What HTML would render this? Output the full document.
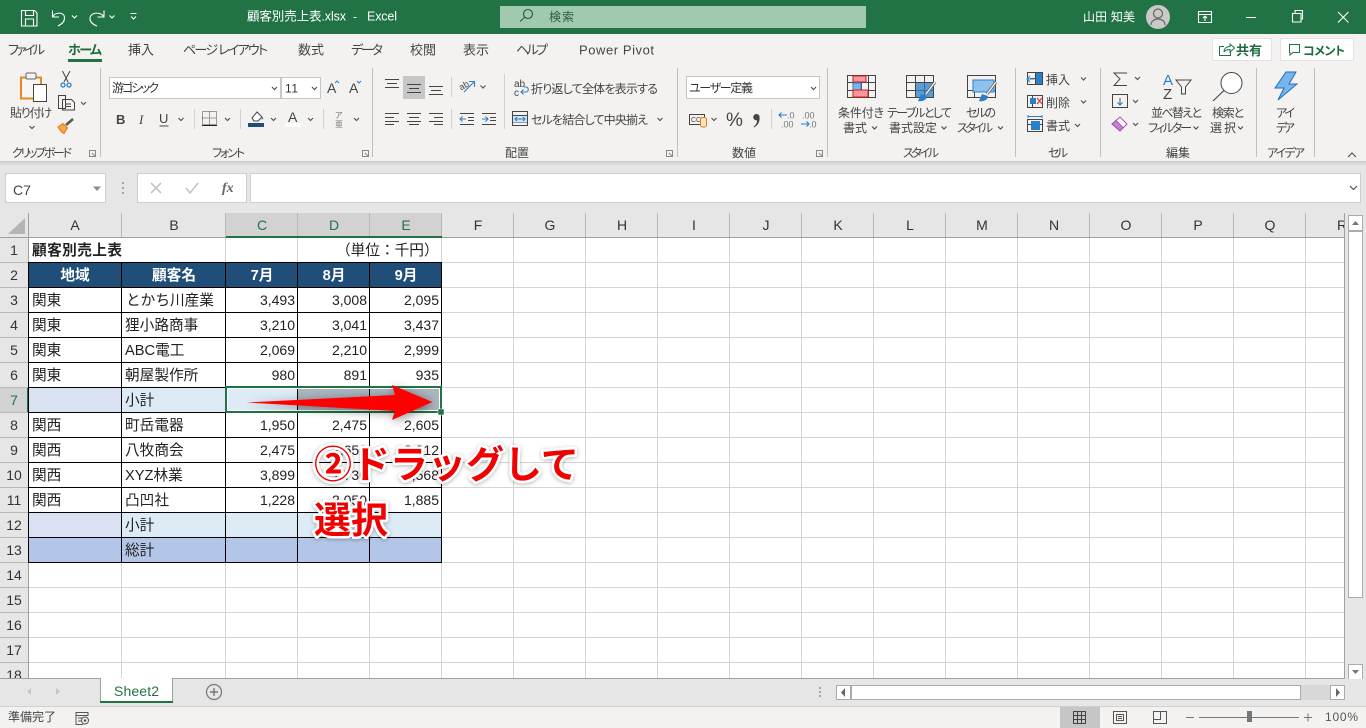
<!DOCTYPE html>
<html lang="ja"><head><meta charset="utf-8"><title>顧客別売上表.xlsx - Excel</title>
<style>
html,body{margin:0;padding:0;width:1366px;height:728px;overflow:hidden;background:#fff}
svg{display:block;position:absolute;left:0;top:0}
text{font-family:"Liberation Sans","Noto Sans CJK JP",sans-serif;font-size:12px;fill:#444;font-feature-settings:"palt"}
.tab{font-size:13px}
.gl{font-size:12px}
.cell text,text.cell{font-size:14.67px;fill:#222;font-feature-settings:normal}
.num text{font-size:14px;fill:#222;text-anchor:end;font-feature-settings:normal}
.hd text{font-size:14px;fill:#333;text-anchor:middle}
.w text{fill:#fff}
.ic{fill:none;stroke:#444;stroke-width:1}
.ch{fill:none;stroke:#555;stroke-width:1.2}
</style></head><body>
<svg width="1366" height="728" viewBox="0 0 1366 728" xmlns="http://www.w3.org/2000/svg">
<defs>
<filter id="sh" x="-10%" y="-60%" width="120%" height="220%"><feDropShadow dx="1" dy="2" stdDeviation="5" flood-color="#000" flood-opacity=".45"/></filter>
<filter id="sh2" x="-10%" y="-30%" width="120%" height="160%"><feDropShadow dx="0" dy="1" stdDeviation="2" flood-color="#000" flood-opacity=".3"/></filter>
<clipPath id="colclip"><rect x="0" y="213" width="1345" height="25"/></clipPath>
<linearGradient id="rs" x1="0" y1="0" x2="0" y2="1"><stop offset="0" stop-color="#c9c9c9"/><stop offset="1" stop-color="#e6e6e6"/></linearGradient>
</defs>

<!-- base -->
<rect width="1366" height="728" fill="#e6e6e6"/>
<rect y="0" width="1366" height="34" fill="#217346"/>
<rect y="34" width="1366" height="127" fill="#f3f2f1"/>
<rect y="161" width="1366" height="5" fill="url(#rs)"/>

<!-- title bar -->
<g fill="none" stroke="#fff" stroke-width="1.1">
<path d="M21.5 10.5h13l2.500 2.500v13h-15.500z M25.500 10.500v5h8v-5 M25.500 25.500v-6.500h8v6.500"/>
<path d="M52.500 10.500v6.500h6.500 M52.500 17C55 12 64 11.500 64.500 17.500C65 22 61 24.500 58 26"/>
<path d="M104 10.500v6.500h-6.500 M104 17C101 12 92 11.500 90 17.500C89.500 22 93 24.500 97 26"/>
<path d="M72 15.500l2.500 2.500 2.500-2.500 M109.500 15.500l2.500 2.500 2.500-2.500 M130.500 13.500h6 M131 16.500l2.500 2.500 2.500-2.500"/>
<path d="M1198.500 11.500h13v11h-13z M1198.500 14.500h13 M1205 21v-5 M1203 18l2-2 2 2"/>
<path d="M1246 17.500h10 M1292.500 13.500h8.500v8.500h-8.500z M1295 13v-2.500h7.500v8.500h-1.500 M1338 12l10.500 10.500 M1348.500 12l-10.500 10.500"/>
</g>
<g class="w">
<text x="247" y="20.500" textLength="99" style="font-size:12.500px">顧客別売上表.xlsx</text>
<text x="353" y="20.500">-</text>
<text x="367" y="20.500" textLength="30" style="font-size:12.500px">Excel</text>
<text x="1083" y="21" textLength="52">山田 知美</text>
</g>
<rect x="500" y="6" width="366" height="22" fill="#a0c9b0"/>
<circle cx="528" cy="14" r="4.500" fill="none" stroke="#1f5d3a" stroke-width="1.100"/><path d="M524.500 17.500l-4.500 4" stroke="#1f5d3a" stroke-width="1.100"/>
<text x="549" y="21" textLength="25" style="fill:#2b5d40">検索</text>
<circle cx="1158" cy="17" r="12" fill="#c9c9c9"/>
<circle cx="1158" cy="13.500" r="4.500" fill="none" stroke="#666" stroke-width="1.200"/><path d="M1151 25c0-8 14-8 14 0" fill="none" stroke="#666" stroke-width="1.200"/>

<!-- tabs -->
<text class="tab" x="8" y="54.500" textLength="37">ファイル</text>
<text class="tab" x="68" y="54.500" textLength="34" style="font-weight:700;fill:#1f6b40">ホーム</text>
<rect x="68" y="59" width="34" height="3" fill="#217346"/>
<text class="tab" x="128" y="54.500" textLength="26">挿入</text>
<text class="tab" x="183" y="54.500" textLength="85">ページ レイアウト</text>
<text class="tab" x="298" y="54.500" textLength="26">数式</text>
<text class="tab" x="351" y="54.500" textLength="32">データ</text>
<text class="tab" x="410" y="54.500" textLength="26">校閲</text>
<text class="tab" x="463" y="54.500" textLength="26">表示</text>
<text class="tab" x="516" y="54.500" textLength="32">ヘルプ</text>
<text x="579" y="54.500" textLength="75" style="font-size:13px">Power Pivot</text>

<rect x="1212.500" y="38.500" width="59" height="22" rx="1.500" fill="#fff" stroke="#e3e2e1"/>
<path d="M1224 46.500h-4.500v9h11v-3.500 M1224 52c0-3.500 2.500-5.500 6-5.500v-2.500l4.500 4-4.500 4v-2.500c-2.500 0-4.500 .5-6 2.500" fill="none" stroke="#217346"/>
<text x="1236" y="55" textLength="26" style="font-weight:700;fill:#1f6b40;font-size:13px">共有</text>
<rect x="1280.500" y="38.500" width="73" height="22" rx="1.500" fill="#fff" stroke="#e3e2e1"/>
<path d="M1289.500 44.500h10v8h-6.500l-3 2.500v-2.500h-.5z" fill="none" stroke="#217346"/>
<text x="1303" y="55" textLength="42" style="font-weight:700;fill:#1f6b40">コメント</text>

<!-- ribbon separators -->
<g stroke="#c0bfbe" shape-rendering="crispEdges">
<path d="M100.500 68v89 M372.500 68v89 M677.500 68v89 M827.500 68v89 M1015.500 68v89 M1100.500 68v89 M1256.500 68v89 M1314.500 68v89"/>
<path stroke="#d4d3d2" d="M194.500 109v20 M240.500 109v20 M323.500 109v20 M451.500 77v20 M451.500 109v20 M504.500 74v55 M771.500 109v20"/>
</g>
<!-- group labels -->
<g>
<text class="gl" x="12" y="157" textLength="60">クリップボード</text>
<text class="gl" x="212" y="157" textLength="33">フォント</text>
<text class="gl" x="505" y="157" textLength="24">配置</text>
<text class="gl" x="732" y="157" textLength="24">数値</text>
<text class="gl" x="903" y="157" textLength="36">スタイル</text>
<text class="gl" x="1048" y="157" textLength="20">セル</text>
<text class="gl" x="1166" y="157" textLength="24">編集</text>
<text class="gl" x="1267" y="157" textLength="38">アイデア</text>
</g>
<g fill="none" stroke="#888" stroke-width="1">
<path d="M89.500 150.500h6v6h-6z M92 153l3 3"/>
<path d="M362.500 150.500h6v6h-6z M365 153l3 3 M666.500 150.500h6v6h-6z M669 153l3 3 M816.500 150.500h6v6h-6z M819 153l3 3"/>
</g>
<path class="ch" d="M1348 157l4-4 4 4"/>

<!-- clipboard -->
<path d="M21 77.500h20v21h-20z" fill="#f7f6f5" stroke="#e8891d" stroke-width="2"/>
<rect x="26" y="73" width="10" height="6" rx="1" fill="#f3f2f1" stroke="#666"/>
<rect x="33.500" y="84.500" width="13" height="17" fill="#fff" stroke="#444"/>
<text x="10" y="117" textLength="42">貼り付け</text>
<path class="ch" d="M29.500 126l2.500 2.500 2.500-2.500"/>
<g fill="none" stroke="#444"><path d="M62.500 71l5.500 11 M70 71l-6 11"/><circle cx="63" cy="85" r="2" stroke="#2a7fc9" stroke-width="1.300"/><circle cx="69" cy="85" r="2" stroke="#2a7fc9" stroke-width="1.300"/>
<path d="M58.500 95.500h7v13h-7z M62.500 99.500h9l3 3v7.500h-12z" fill="#f3f2f1"/><path d="M65 104h6 M65 106.500h6"/></g>
<path class="ch" d="M81 102l2.500 2.500 2.500-2.500"/>
<path d="M58 127l5-3.500 4.500 4.500-3.500 5.500c-2-.5-4-3-6-6.500z" fill="#f5a64a" stroke="#e07b12"/><path d="M66 125l7-6" stroke="#555" stroke-width="2.500"/>

<!-- font -->
<rect x="109.500" y="77.500" width="171" height="21" fill="#fff" stroke="#c6c6c6"/>
<rect x="281.500" y="77.500" width="39" height="21" fill="#fff" stroke="#c6c6c6"/>
<text x="112" y="92" textLength="47" style="fill:#333">游ゴシック</text>
<text x="285" y="92.500" textLength="13" style="fill:#333">11</text>
<path class="ch" d="M272 87l2.500 2.500 2.500-2.500 M312 87l2.500 2.500 2.500-2.500"/>
<text x="327" y="93" style="font-size:14px">A</text><path d="M335 83l2-2 2 2" fill="none" stroke="#2a7fc9"/>
<text x="349" y="93" style="font-size:14px">A</text><path d="M357 81l2 2 2-2" fill="none" stroke="#2a7fc9"/>
<text x="116" y="124" style="font-size:13px;font-weight:700">B</text>
<text x="139" y="124" style="font-size:13px;font-style:italic;font-family:'Liberation Serif',serif">I</text>
<text x="159" y="123" style="font-size:13px">U</text><path d="M159.500 126h9" stroke="#444"/>
<path class="ch" d="M178.500 118l2.500 2.500 2.500-2.500 M225 118l2.500 2.500 2.500-2.500 M271 118l2.500 2.500 2.500-2.500 M308 118l2.500 2.500 2.500-2.500 M354 118l2.500 2.500 2.500-2.500"/>
<path d="M202.500 111.500h14v13h-14z M209.500 111.500v13 M202.500 118h14" fill="none" stroke="#444" stroke-dasharray="1 1"/><rect x="202" y="125" width="15" height="1" fill="#222"/>
<path d="M252 118l5-6 5 5-4 4h-4z" fill="#fff" stroke="#444"/><path d="M262 116l1.500 3-2 .5z" fill="#2a7fc9"/><rect x="248" y="123" width="16" height="4" fill="#1f4e79"/>
<text x="288" y="122" style="font-size:14px">A</text><rect x="285" y="123" width="16" height="4" fill="#fff"/>
<text x="335" y="118" style="font-size:8px;fill:#777">ア</text><text x="335" y="127" style="font-size:8px;fill:#777">亜</text>

<!-- align -->
<rect x="403" y="76" width="22" height="23" fill="#c6c6c6"/>
<path class="ic" stroke="#333" d="M385 79.500h14 M387 83.500h10 M385 87.500h14 M407 84.500h14 M409 88.500h10 M407 92.500h14 M429 86.500h14 M431 90.500h10 M429 94.500h14 M385 113.500h14 M385 117.500h9 M385 121.500h14 M385 124.500h9 M407 113.500h14 M409 117.500h10 M407 121.500h14 M409 124.500h10 M429 113.500h14 M434 117.500h9 M429 121.500h14 M434 124.500h9"/>
<text x="459" y="89" style="font-size:9px;fill:#444" transform="rotate(-30 463 86)">ab</text>
<path d="M464 92l10-10 M469 81.500h5.500v5.500" fill="none" stroke="#2a7fc9" stroke-width="1.100"/>
<path class="ch" d="M480.500 85.500l2.500 2.500 2.500-2.500 M657.500 118l2.500 2.500 2.500-2.500 M711.500 118l2.500 2.500 2.500-2.500"/>
<path class="ic" d="M460 113.500h14 M468 117.500h6 M468 120.500h6 M460 124.500h14 M482 113.500h14 M490 117.500h6 M490 120.500h6 M482 124.500h14"/>
<path d="M466 119h-6 M462.500 116.500l-2.500 2.500 2.500 2.500 M482 119h6 M485.500 116.500l2.500 2.500-2.500 2.500" fill="none" stroke="#2a7fc9" stroke-width="1.100"/>
<text x="514" y="87" style="font-size:10px">ab</text><text x="514" y="96" style="font-size:10px">c</text>
<path d="M521 92h5c3 0 3-5 0-5h-2 M523.500 89.500l-2.500 2.500 2.500 2.500" fill="none" stroke="#2a7fc9" stroke-width="1.100"/>
<text x="531" y="93" textLength="127">折り返して全体を表示する</text>
<path d="M512.500 111.500h15v14h-15z M512.500 115.500h15 M512.500 122h15" fill="none" stroke="#444"/><rect x="513" y="116" width="14" height="6" fill="#cfe4f7"/><path d="M515 119h10 M517 117l-2 2 2 2 M523 117l2 2-2 2" fill="none" stroke="#2a7fc9"/>
<text x="531" y="124" textLength="117">セルを結合して中央揃え</text>

<!-- number -->
<rect x="686.500" y="76.500" width="133" height="22" fill="#fff" stroke="#c6c6c6"/>
<text x="689" y="92" textLength="64" style="fill:#333">ユーザー定義</text>
<path class="ch" d="M811 87l2.500 2.500 2.500-2.500"/>
<path d="M689.500 114.500h15v10h-15z" fill="none" stroke="#444"/><text x="691" y="122" style="font-size:7px;fill:#444">CC</text>
<rect x="700.500" y="117.500" width="6" height="9.500" rx="2" fill="#fbe3c6" stroke="#e07b12"/>
<text x="726" y="126" style="font-size:19px;fill:#444">%</text>
<path d="M756.500 114a3.200 3.200 0 1 1-.1 6.400a3.200 3.200 0 0 1 .1-6.400z M759.500 117c.5 4-1 8-5.500 10.500l-.5-.8c2.500-1.700 3.500-4 3.500-6z" fill="#444"/>
<text x="787" y="118.500" style="font-size:9px;fill:#777">.0</text><text x="781" y="127.500" style="font-size:9px;fill:#777">.00</text>
<path d="M787 115h-8 M781.500 112.500l-2.500 2.500 2.500 2.500" fill="none" stroke="#2a7fc9" stroke-width="1.100"/>
<text x="802" y="118.500" style="font-size:9px;fill:#777">.00</text><text x="809" y="127.500" style="font-size:9px;fill:#777">.0</text>
<path d="M801 124h8 M806.500 121.500l2.500 2.500-2.500 2.500" fill="none" stroke="#2a7fc9" stroke-width="1.100"/>

<!-- styles -->
<g fill="none" stroke="#444" shape-rendering="crispEdges">
<path d="M847.500 75.500h28v22h-28z M847.500 82.500h28 M847.500 90.500h28 M854.500 75.500v22 M861.500 75.500v22 M868.500 75.500v22"/>
</g>
<rect x="853" y="76" width="13" height="6" fill="#f79a9f" stroke="#d01b1b"/><rect x="853" y="83" width="8" height="7" fill="#7db7ea" stroke="#2a7fc9"/><rect x="853" y="90" width="15" height="7" fill="#f79a9f" stroke="#d01b1b"/>
<text x="838" y="117" textLength="46">条件付き</text>
<text x="843" y="132" textLength="24">書式</text>
<g fill="none" stroke="#444" shape-rendering="crispEdges"><path d="M906.500 75.500h27v22h-27z M906.500 82.500h27 M906.500 90.500h27 M915.500 75.500v22 M924.500 75.500v22 M967.500 75.500h28v22h-28z M967.500 90.500h28 M974.500 90.500v7"/></g>
<rect x="916" y="83" width="17" height="14" fill="#2a7fc9" opacity=".75"/><rect x="973" y="80" width="21" height="12" fill="#8dc1ee" stroke="#2a7fc9"/>
<path d="M935 82l-9 12 M996 82l-9 12" stroke="#666" stroke-width="3" fill="none"/>
<path d="M935 82l-9 12 M996 82l-9 12" stroke="#fff" stroke-width="1.200" fill="none"/>
<path d="M918 101l3-7 6 2c0 4-5 6-9 5z M979 101l3-7 6 2c0 4-5 6-9 5z" fill="#2a7fc9"/>
<text x="887" y="117" textLength="65">テーブルとして</text>
<text x="889" y="132" textLength="48">書式設定</text>
<text x="966" y="117" textLength="30">セルの</text>
<text x="957" y="132" textLength="36">スタイル</text>
<path class="ch" d="M872 126.500l2.500 2.500 2.500-2.500 M941.500 126.500l2.500 2.500 2.500-2.500 M998 126.500l2.500 2.500 2.500-2.500 M1193.500 126.500l2.500 2.500 2.500-2.500 M1238 126.500l2.500 2.500 2.500-2.500"/>

<!-- cells -->
<g fill="none" stroke="#444" shape-rendering="crispEdges">
<path d="M1027.500 72.500h15v12h-15z M1027.500 78.500h15 M1035.500 72.500v12"/>
<path d="M1027.500 95.500h15v12h-15z M1032.500 95.500v12"/>
<path d="M1027.500 119.500h15v12h-15z M1027.500 124.500h15"/>
</g>
<rect x="1036" y="73" width="6" height="11" fill="#2a7fc9"/>
<path d="M1027 79h7 M1030 76l-3 3 3 3" stroke="#2a7fc9" fill="#f3f2f1"/>
<rect x="1030" y="98" width="6" height="6" fill="#2a7fc9"/><path d="M1037 98l5 6 M1042 98l-5 6" stroke="#e03b3b" stroke-width="1.300"/>
<rect x="1031" y="121" width="9" height="9" fill="#2a7fc9"/>
<path d="M1028 116.500h14 M1028 115v3 M1042 115v3" stroke="#2a7fc9" fill="none"/>
<text x="1046" y="84" textLength="24">挿入</text>
<text x="1046" y="107" textLength="24">削除</text>
<text x="1046" y="130" textLength="24">書式</text>
<path class="ch" d="M1081 77.500l2.500 2.500 2.500-2.500 M1081 100.500l2.500 2.500 2.500-2.500 M1075 124l2.500 2.500 2.500-2.500"/>

<!-- editing -->
<path d="M1127 73h-13l6 6-6 6.500h13" fill="none" stroke="#444"/>
<path d="M1112.500 94.500h15v13h-15z" fill="none" stroke="#444"/><path d="M1120 98v7 M1117.500 102.500l2.500 2.500 2.500-2.500" fill="none" stroke="#2a7fc9" stroke-width="1.200"/>
<path d="M1112 124l8-7 7 7-7 7z" fill="#fff" stroke="#a94fb3"/><path d="M1112 124l4-3.500 7 7-3 3.500z" fill="#c77fd0" stroke="#a94fb3"/>
<path class="ch" d="M1135 77l2.500 2.500 2.500-2.500 M1133 100l2.500 2.500 2.500-2.500 M1133 123l2.500 2.500 2.500-2.500"/>
<text x="1163" y="85" style="font-size:15px;fill:#2a7fc9">A</text>
<text x="1163" y="99" style="font-size:15px;fill:#444">Z</text>
<path d="M1176 80h15l-5.500 7v7l-4 0v-7z" fill="none" stroke="#444"/>
<text x="1151" y="117" textLength="51">並べ替えと</text>
<text x="1148" y="132" textLength="44">フィルター</text>
<circle cx="1231.500" cy="83" r="10.500" fill="#fff" stroke="#444"/><path d="M1224 90.500l-11 10.500" stroke="#444" stroke-width="1.100"/>
<text x="1212" y="117" textLength="32">検索と</text>
<text x="1210" y="132" textLength="26">選択</text>
<path d="M1286 72h10l-7 12h8L1278 100l6-12h-9z" fill="#79b4ec" stroke="#1f6fc0"/>
<text x="1276" y="117" textLength="19">アイ</text>
<text x="1276" y="132" textLength="19">デア</text>

<!-- formula bar -->
<rect x="5.500" y="173.500" width="100" height="29" fill="#fff" stroke="#cfcfcf"/>
<text x="13" y="195" style="font-size:14px">C7</text>
<path d="M93 186.500h8l-4 4.500z" fill="#8a8a8a"/>
<path d="M122 182h2v2h-2z M122 187h2v2h-2z M122 192h2v2h-2z" fill="#a5a5a5"/>
<rect x="137.500" y="173.500" width="109" height="29" fill="#fff" stroke="#cfcfcf"/>
<rect x="250.500" y="173.500" width="1110" height="29" fill="#fff" stroke="#cfcfcf"/>
<path d="M151 183l10 10 M161 183l-10 10 M186 188l4 5 8-10" fill="none" stroke="#c4c4c4" stroke-width="1.600"/>
<text x="222" y="192" style="font-size:14px;font-style:italic;font-weight:700;font-family:'Liberation Serif',serif;fill:#666">fx</text>
<path class="ch" d="M1350 186l3.500 3.500 3.500-3.500"/>

<!-- sheet -->
<rect x="29" y="238" width="1316" height="441" fill="#fff"/>
<rect x="0" y="213" width="1345" height="25" fill="#e6e6e6"/>
<rect x="0" y="238" width="28" height="441" fill="#e6e6e6"/>
<path d="M25 218v16h-17z" fill="#b5b5b5"/>
<rect x="226" y="213" width="216" height="23" fill="#d2d2d2"/>
<rect x="0" y="388" width="28" height="24" fill="#d2d2d2"/>
<g stroke="#d4d4d4" shape-rendering="crispEdges" fill="none">
<path d="M29 262.500H1345 M29 287.500H1345 M29 312.500H1345 M29 337.500H1345 M29 362.500H1345 M29 387.500H1345 M29 412.500H1345 M29 437.500H1345 M29 462.500H1345 M29 487.500H1345 M29 512.500H1345 M29 537.500H1345 M29 562.500H1345 M29 587.500H1345 M29 612.500H1345 M29 637.500H1345 M29 662.500H1345"/>
<path d="M225.500 238V679 M297.500 238V679 M441.500 238V679 M513.500 238V679 M585.500 238V679 M657.500 238V679 M729.500 238V679 M801.500 238V679 M873.500 238V679 M945.500 238V679 M1017.500 238V679 M1089.500 238V679 M1161.500 238V679 M1233.500 238V679 M1305.500 238V679"/>
<path d="M121.500 262V679 M369.500 262V679"/>
</g>
<!-- header lines -->
<g stroke="#b8b8b8" shape-rendering="crispEdges" fill="none">
<path d="M121.500 213v24 M225.500 213v24 M297.500 213v24 M369.500 213v24 M441.500 213v24 M513.500 213v24 M585.500 213v24 M657.500 213v24 M729.500 213v24 M801.500 213v24 M873.500 213v24 M945.500 213v24 M1017.500 213v24 M1089.500 213v24 M1161.500 213v24 M1233.500 213v24 M1305.500 213v24"/>
<path d="M0 262.500h28 M0 287.500h28 M0 312.500h28 M0 337.500h28 M0 362.500h28 M0 387.500h28 M0 412.500h28 M0 437.500h28 M0 462.500h28 M0 487.500h28 M0 512.500h28 M0 537.500h28 M0 562.500h28 M0 587.500h28 M0 612.500h28 M0 637.500h28 M0 662.500h28"/>
<path stroke="#9f9f9f" d="M28.500 213V679 M0 237.500H1345"/>
</g>
<rect x="226" y="236" width="216" height="2" fill="#217346"/>
<rect x="27" y="388" width="2" height="24" fill="#217346"/>

<g class="hd" clip-path="url(#colclip)">
<text x="75" y="230">A</text><text x="174" y="230">B</text>
<text x="262" y="230" style="fill:#217346">C</text><text x="334" y="230" style="fill:#217346">D</text><text x="406" y="230" style="fill:#217346">E</text>
<text x="478" y="230">F</text><text x="550" y="230">G</text><text x="622" y="230">H</text><text x="694" y="230">I</text><text x="766" y="230">J</text><text x="838" y="230">K</text><text x="910" y="230">L</text><text x="982" y="230">M</text><text x="1054" y="230">N</text><text x="1126" y="230">O</text><text x="1198" y="230">P</text><text x="1270" y="230">Q</text><text x="1342" y="230">R</text>
</g>
<g class="hd">
<text x="14" y="255">1</text><text x="14" y="280">2</text><text x="14" y="305">3</text><text x="14" y="330">4</text><text x="14" y="355">5</text><text x="14" y="380">6</text><text x="14" y="405" style="fill:#217346">7</text><text x="14" y="430">8</text><text x="14" y="455">9</text><text x="14" y="480">10</text><text x="14" y="505">11</text><text x="14" y="530">12</text><text x="14" y="555">13</text><text x="14" y="580">14</text><text x="14" y="605">15</text><text x="14" y="630">16</text><text x="14" y="655">17</text><text x="14" y="680">18</text>
</g>

<!-- table fills -->
<rect x="29" y="263" width="412" height="24" fill="#1f4e79"/>
<rect x="29" y="388" width="92" height="24" fill="#d9e1f2"/><rect x="122" y="388" width="319" height="24" fill="#ddebf7"/>
<rect x="29" y="513" width="92" height="24" fill="#d9e1f2"/><rect x="122" y="513" width="319" height="24" fill="#ddebf7"/>
<rect x="29" y="538" width="412" height="24" fill="#b4c6e7"/>
<rect x="298" y="388" width="144" height="24" fill="#aab5be"/>
<!-- table borders -->
<g stroke="#000" shape-rendering="crispEdges" fill="none">
<path d="M29 262.500H442 M29 287.500H442 M29 312.500H442 M29 337.500H442 M29 362.500H442 M29 387.500H442 M29 412.500H442 M29 437.500H442 M29 462.500H442 M29 487.500H442 M29 512.500H442 M29 537.500H442 M29 562.500H442"/>
<path d="M121.500 262V563 M225.500 262V563 M297.500 262V563 M369.500 262V563 M441.500 262V563 M28.500 262V563"/>
</g>

<!-- table text -->
<text x="32" y="255" class="cell" textLength="90" style="font-weight:700">顧客別売上表</text>
<text x="336" y="255" class="cell">（単位：千円）</text>
<text x="75" y="280" text-anchor="middle" class="cell" style="fill:#fff;font-weight:700">地域</text>
<text x="174" y="280" text-anchor="middle" class="cell" style="fill:#fff;font-weight:700">顧客名</text>
<text x="262" y="280" text-anchor="middle" class="cell" style="fill:#fff;font-weight:700">7月</text>
<text x="334" y="280" text-anchor="middle" class="cell" style="fill:#fff;font-weight:700">8月</text>
<text x="406" y="280" text-anchor="middle" class="cell" style="fill:#fff;font-weight:700">9月</text>
<g class="cell">
<text x="32" y="305">関東</text><text x="126" y="305">とかち川産業</text>
<text x="32" y="330">関東</text><text x="125" y="330">狸小路商事</text>
<text x="32" y="355">関東</text><text x="125" y="355">ABC電工</text>
<text x="32" y="380">関東</text><text x="125" y="380">朝屋製作所</text>
<text x="125" y="405">小計</text>
<text x="32" y="430">関西</text><text x="125" y="430">町岳電器</text>
<text x="32" y="455">関西</text><text x="125" y="455">八牧商会</text>
<text x="32" y="480">関西</text><text x="125" y="480">XYZ林業</text>
<text x="32" y="505">関西</text><text x="125" y="505">凸凹社</text>
<text x="125" y="530">小計</text>
<text x="125" y="555">総計</text>
</g>
<g class="num">
<text x="295" y="305">3,493</text><text x="367" y="305">3,008</text><text x="439" y="305">2,095</text>
<text x="295" y="330">3,210</text><text x="367" y="330">3,041</text><text x="439" y="330">3,437</text>
<text x="295" y="355">2,069</text><text x="367" y="355">2,210</text><text x="439" y="355">2,999</text>
<text x="295" y="380">980</text><text x="367" y="380">891</text><text x="439" y="380">935</text>
<text x="295" y="430">1,950</text><text x="367" y="430">2,475</text><text x="439" y="430">2,605</text>
<text x="295" y="455">2,475</text><text x="367" y="455">2,651</text><text x="439" y="455">3,212</text>
<text x="295" y="480">3,899</text><text x="367" y="480">1,730</text><text x="439" y="480">4,568</text>
<text x="295" y="505">1,228</text><text x="367" y="505">2,050</text><text x="439" y="505">1,885</text>
</g>

<!-- selection -->
<rect x="226" y="387" width="215" height="25" fill="none" stroke="#217346" stroke-width="2" shape-rendering="crispEdges"/>
<rect x="227.500" y="388.500" width="212" height="22" fill="none" stroke="#fff" shape-rendering="crispEdges"/>
<rect x="438" y="409" width="6" height="6" fill="#217346" stroke="#fff" stroke-width=".5"/>

<!-- arrow -->
<path d="M246.500 402.500L395 395 392 385 432.500 402 392 420 395 411z" fill="#fe0000" filter="url(#sh)"/>

<!-- annotation -->
<g filter="url(#sh2)">
<text x="314" y="478" style="font-size:38px;font-weight:700;fill:#f00000;stroke:#fff;stroke-width:5px;paint-order:stroke;stroke-linejoin:round;font-feature-settings:normal">②ドラッグして</text>
<text x="314" y="533" style="font-size:37px;font-weight:700;fill:#f00000;stroke:#fff;stroke-width:5px;paint-order:stroke;stroke-linejoin:round;font-feature-settings:normal">選択</text>
</g>

<!-- vertical scrollbar -->
<rect x="1345" y="213" width="21" height="466" fill="#e6e6e6"/>
<path d="M1344.500 213V679" stroke="#a0a0a0" shape-rendering="crispEdges"/>
<rect x="1348.500" y="215.500" width="14" height="15" fill="#fff" stroke="#ababab"/>
<path d="M1352 225l3.500-4 3.500 4z" fill="#777"/>
<rect x="1348.500" y="231.500" width="14" height="366" fill="#fff" stroke="#ababab"/>
<rect x="1348.500" y="664.500" width="14" height="15" fill="#fff" stroke="#ababab"/>
<path d="M1352 670l3.500 4 3.500-4z" fill="#777"/>

<!-- tab bar -->
<rect x="0" y="679" width="1366" height="28" fill="#e6e6e6"/>
<path d="M0 678.500H100 M173 678.500H1345" stroke="#a0a0a0" shape-rendering="crispEdges"/>
<path d="M31 688l-4 3.500 4 3.500z M56 688l4 3.500-4 3.500z" fill="#c6c6c6"/>
<rect x="100.500" y="678" width="72" height="24" fill="#fff"/>
<path d="M100.500 678v24 M172.500 678v24" stroke="#a0a0a0" shape-rendering="crispEdges"/>
<rect x="100" y="701" width="73" height="2" fill="#217346"/>
<text x="114" y="696" textLength="45" style="font-size:14px;fill:#217346;font-feature-settings:normal">Sheet2</text>
<circle cx="214" cy="692" r="7.500" fill="none" stroke="#777" stroke-width="1.200"/><path d="M214 688v8 M210 692h8" stroke="#777" stroke-width="1.400"/>
<path d="M819 687h2v2h-2z M819 691h2v2h-2z M819 695h2v2h-2z" fill="#a5a5a5"/>
<rect x="836.500" y="685.500" width="14" height="14" fill="#fff" stroke="#ababab"/><path d="M845 688v9l-4-4.500z" fill="#666"/>
<rect x="851.500" y="685.500" width="449" height="14" fill="#fff" stroke="#ababab"/>
<rect x="1301" y="685" width="29" height="15" fill="#d8d8d8"/>
<rect x="1330.500" y="685.500" width="14" height="14" fill="#fff" stroke="#ababab"/><path d="M1336 688v9l4-4.500z" fill="#666"/>

<!-- status bar -->
<rect x="0" y="707" width="1366" height="21" fill="#f3f2f1"/>
<path d="M0 706.500H1366" stroke="#d0d0d0" shape-rendering="crispEdges"/>
<text x="8" y="721" textLength="48">準備完了</text>
<path d="M76 712.500h12v3h-12z M76 715.500v9h7 M78 718h4 M78 721h3" fill="none" stroke="#555"/><circle cx="85" cy="720.500" r="3.500" fill="none" stroke="#555"/><circle cx="85" cy="720.500" r="1.300" fill="#555"/>
<rect x="1060" y="707" width="40" height="21" fill="#c6c6c6"/>
<path d="M1073.500 711.500h12v12h-12z M1077.500 711.500v12 M1081.500 711.500v12 M1073.500 715.500h12 M1073.500 719.500h12" fill="none" stroke="#444" shape-rendering="crispEdges"/>
<path d="M1113.500 711.500h13v12h-13z M1116.500 714.500h7v6h-7z M1118 716.500h4 M1118 718.500h4" fill="none" stroke="#555" shape-rendering="crispEdges"/>
<path d="M1153.500 711.500h13v12h-13z M1153.500 719.500h7v-8" fill="none" stroke="#555" shape-rendering="crispEdges"/>
<path d="M1186 717.500h8 M1199 717.500h100 M1304 717.500h8 M1308 713.500v8" stroke="#777" shape-rendering="crispEdges"/>
<rect x="1247" y="711" width="5" height="11" fill="#777"/>
<text x="1325" y="721" textLength="33" style="fill:#555">100%</text>
</svg>
</body></html>
